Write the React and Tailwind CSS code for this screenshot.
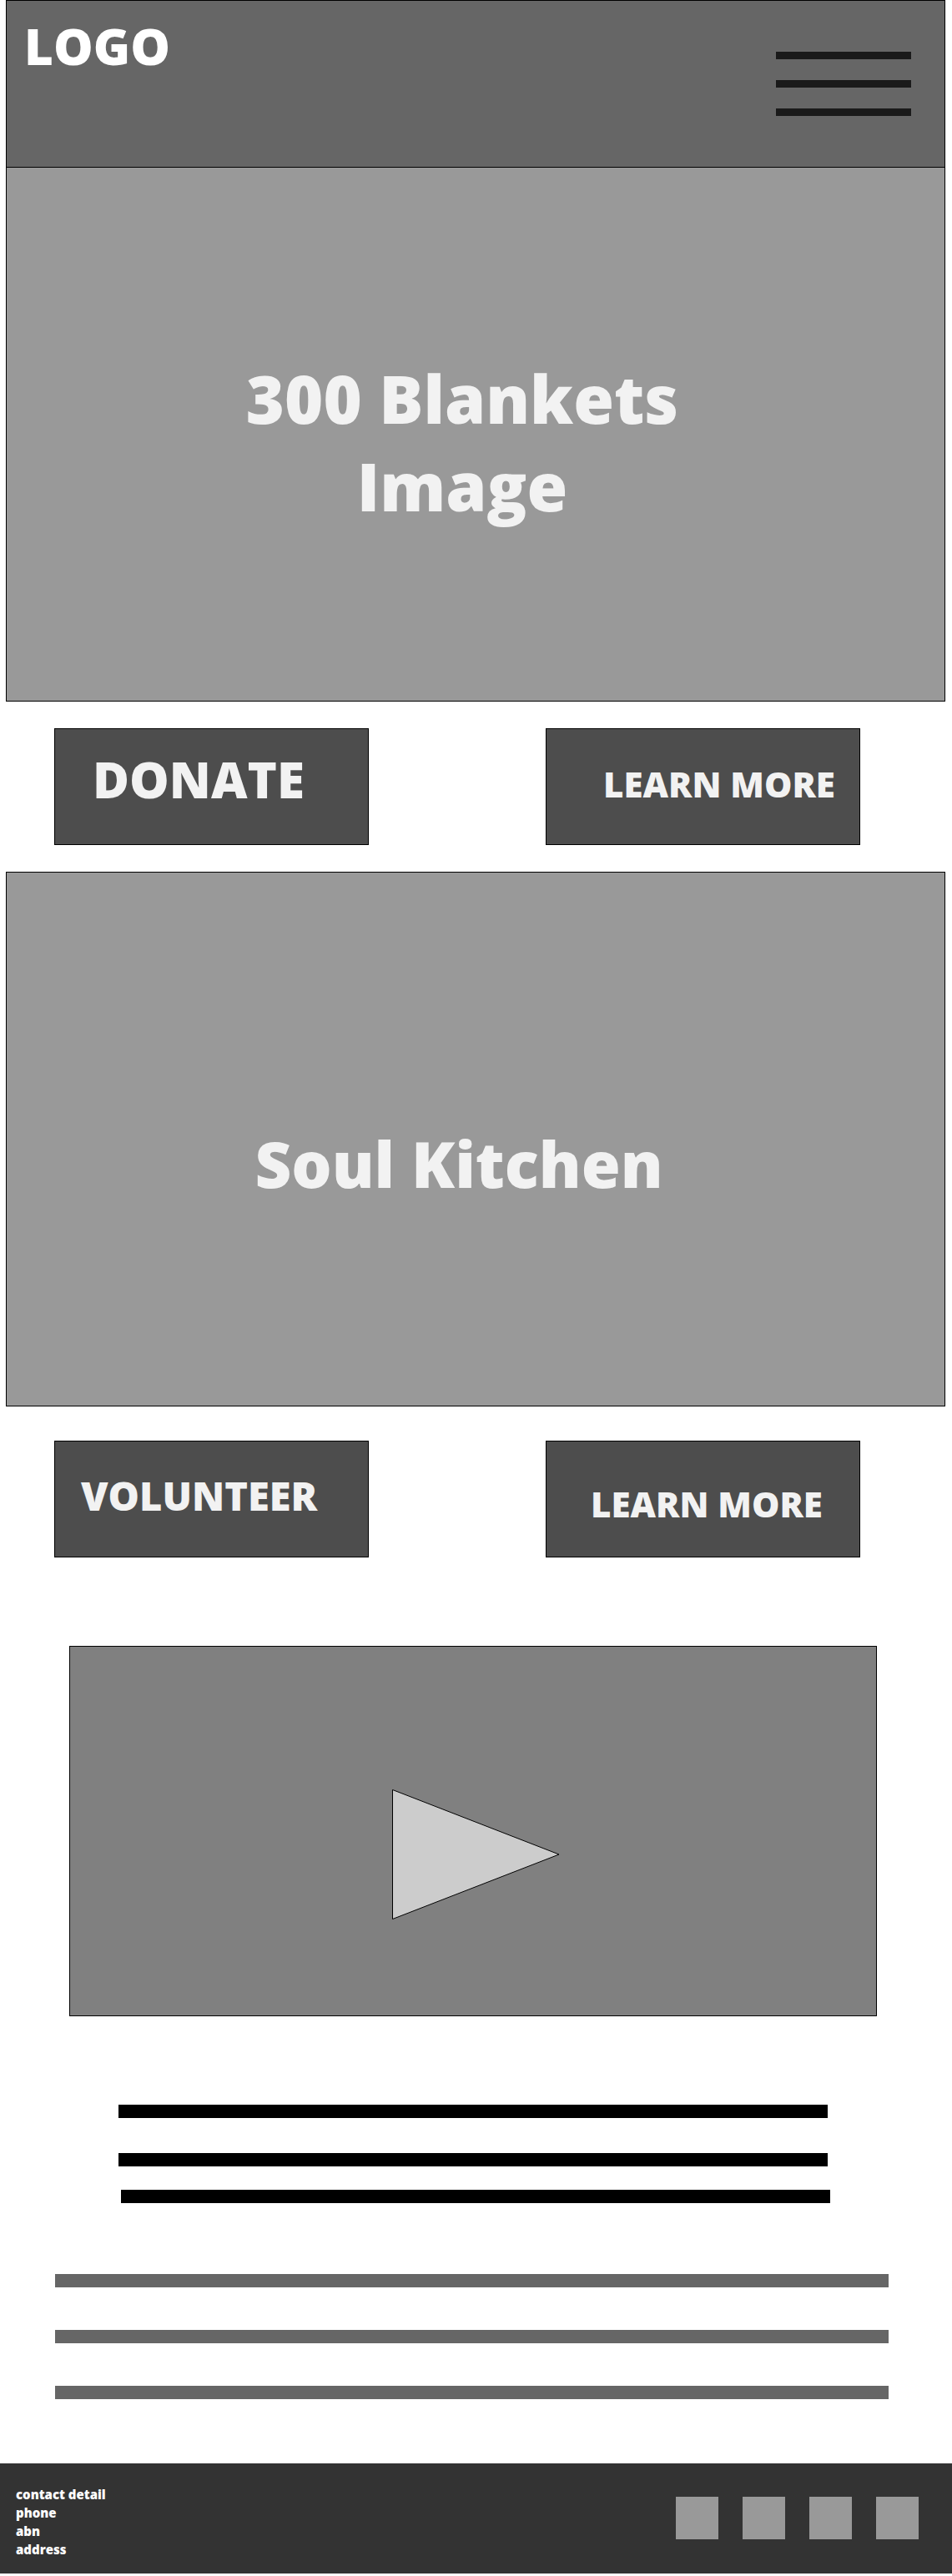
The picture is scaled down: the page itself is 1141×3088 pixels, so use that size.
function MenuButton() {
  return (
    <button type="button" aria-label="Open menu" className="flex w-[162px] flex-col gap-[25px]">
      <span className="h-[9px] w-full bg-[#1a1a1a]" />
      <span className="h-[9px] w-full bg-[#1a1a1a]" />
      <span className="h-[9px] w-full bg-[#1a1a1a]" />
    </button>
  );
}

function Banner({ children }) {
  return (
    <section className="mr-2 ml-[7px] flex h-[641px] justify-center border border-black bg-[#999999] text-center text-[#f2f2f2]">
      {children}
    </section>
  );
}

function Actions({ children }) {
  return <div className="grid grid-cols-2 gap-[212px] pr-[110px] pl-[65px]">{children}</div>;
}

function Action({ className, children }) {
  return (
    <button
      type="button"
      className={`flex h-[140px] items-start border border-black bg-[#4d4d4d] leading-[60px] whitespace-nowrap text-[#f2f2f2] ${className}`}
    >
      {children}
    </button>
  );
}

export default function App() {
  return (
    <div className="bg-white pb-[3px] font-['Open_Sans','Noto_Sans',sans-serif] font-extrabold">
      <header className="mr-2 ml-[7px] flex h-[200px] items-start justify-between border border-b-0 border-black bg-[#666666] pr-10 pl-[21px]">
        <a href="#home" className="pt-6 text-[60px] leading-[60px] text-white">
          LOGO
        </a>
        <div className="pt-[61px]">
          <MenuButton />
        </div>
      </header>

      <main>
        <Banner>
          <h1 className="pt-[224px] pr-8 text-[79px] leading-[105px]">
            300 Blankets
            <br />
            Image
          </h1>
        </Banner>
        <div className="py-8">
          <Actions>
            <Action className="pt-[30px] pl-[45px] text-[60px]">DONATE</Action>
            <Action className="pt-[36px] pl-[68px] text-[42px]">LEARN MORE</Action>
          </Actions>
        </div>

        <Banner>
          <h2 className="pt-[296px] pr-10 text-[76px] leading-[105px]">Soul Kitchen</h2>
        </Banner>
        <div className="pt-[41px]">
          <Actions>
            <Action className="pt-[35px] pl-[31px] text-[47px]">VOLUNTEER</Action>
            <Action className="pt-[45px] pl-[53px] text-[42px]">LEARN MORE</Action>
          </Actions>
        </div>

        <section className="mt-[106px] mr-[90px] ml-[83px] flex h-[444px] items-center justify-center border border-black bg-[#808080]">
          <button type="button" aria-label="Play video" className="mt-[56px] ml-2">
            <svg width="204" height="158" viewBox="0 0 204 158">
              <path d="M1.5 1.5 L201 79 L1.5 156.5 Z" fill="#cccccc" stroke="#000000" />
            </svg>
          </button>
        </section>

        <div className="mt-[106px] mr-[146px] ml-[142px]">
          <div className="mr-[3px] h-4 bg-black" />
          <div className="mt-[42px] mr-[3px] h-4 bg-black" />
          <div className="mt-[28px] ml-[3px] h-4 bg-black" />
        </div>

        <div className="mt-[85px] mr-[76px] ml-[66px] flex flex-col gap-[51px]">
          <div className="h-4 bg-[#666666]" />
          <div className="h-4 bg-[#666666]" />
          <div className="h-4 bg-[#666666]" />
        </div>
      </main>

      <footer className="mt-[77px] flex h-[132px] items-start justify-between bg-[#333333] pr-10 pl-[19px]">
        <address className="pt-[26px] text-[15px] leading-[22px] text-white not-italic">
          contact detail
          <br />
          phone
          <br />
          abn
          <br />
          address
        </address>
        <nav aria-label="Social links" className="flex gap-[29px] pt-10">
          <a href="#one" aria-label="Social link 1" className="size-[51px] bg-[#999999]" />
          <a href="#two" aria-label="Social link 2" className="size-[51px] bg-[#999999]" />
          <a href="#three" aria-label="Social link 3" className="size-[51px] bg-[#999999]" />
          <a href="#four" aria-label="Social link 4" className="size-[51px] bg-[#999999]" />
        </nav>
      </footer>
    </div>
  );
}
